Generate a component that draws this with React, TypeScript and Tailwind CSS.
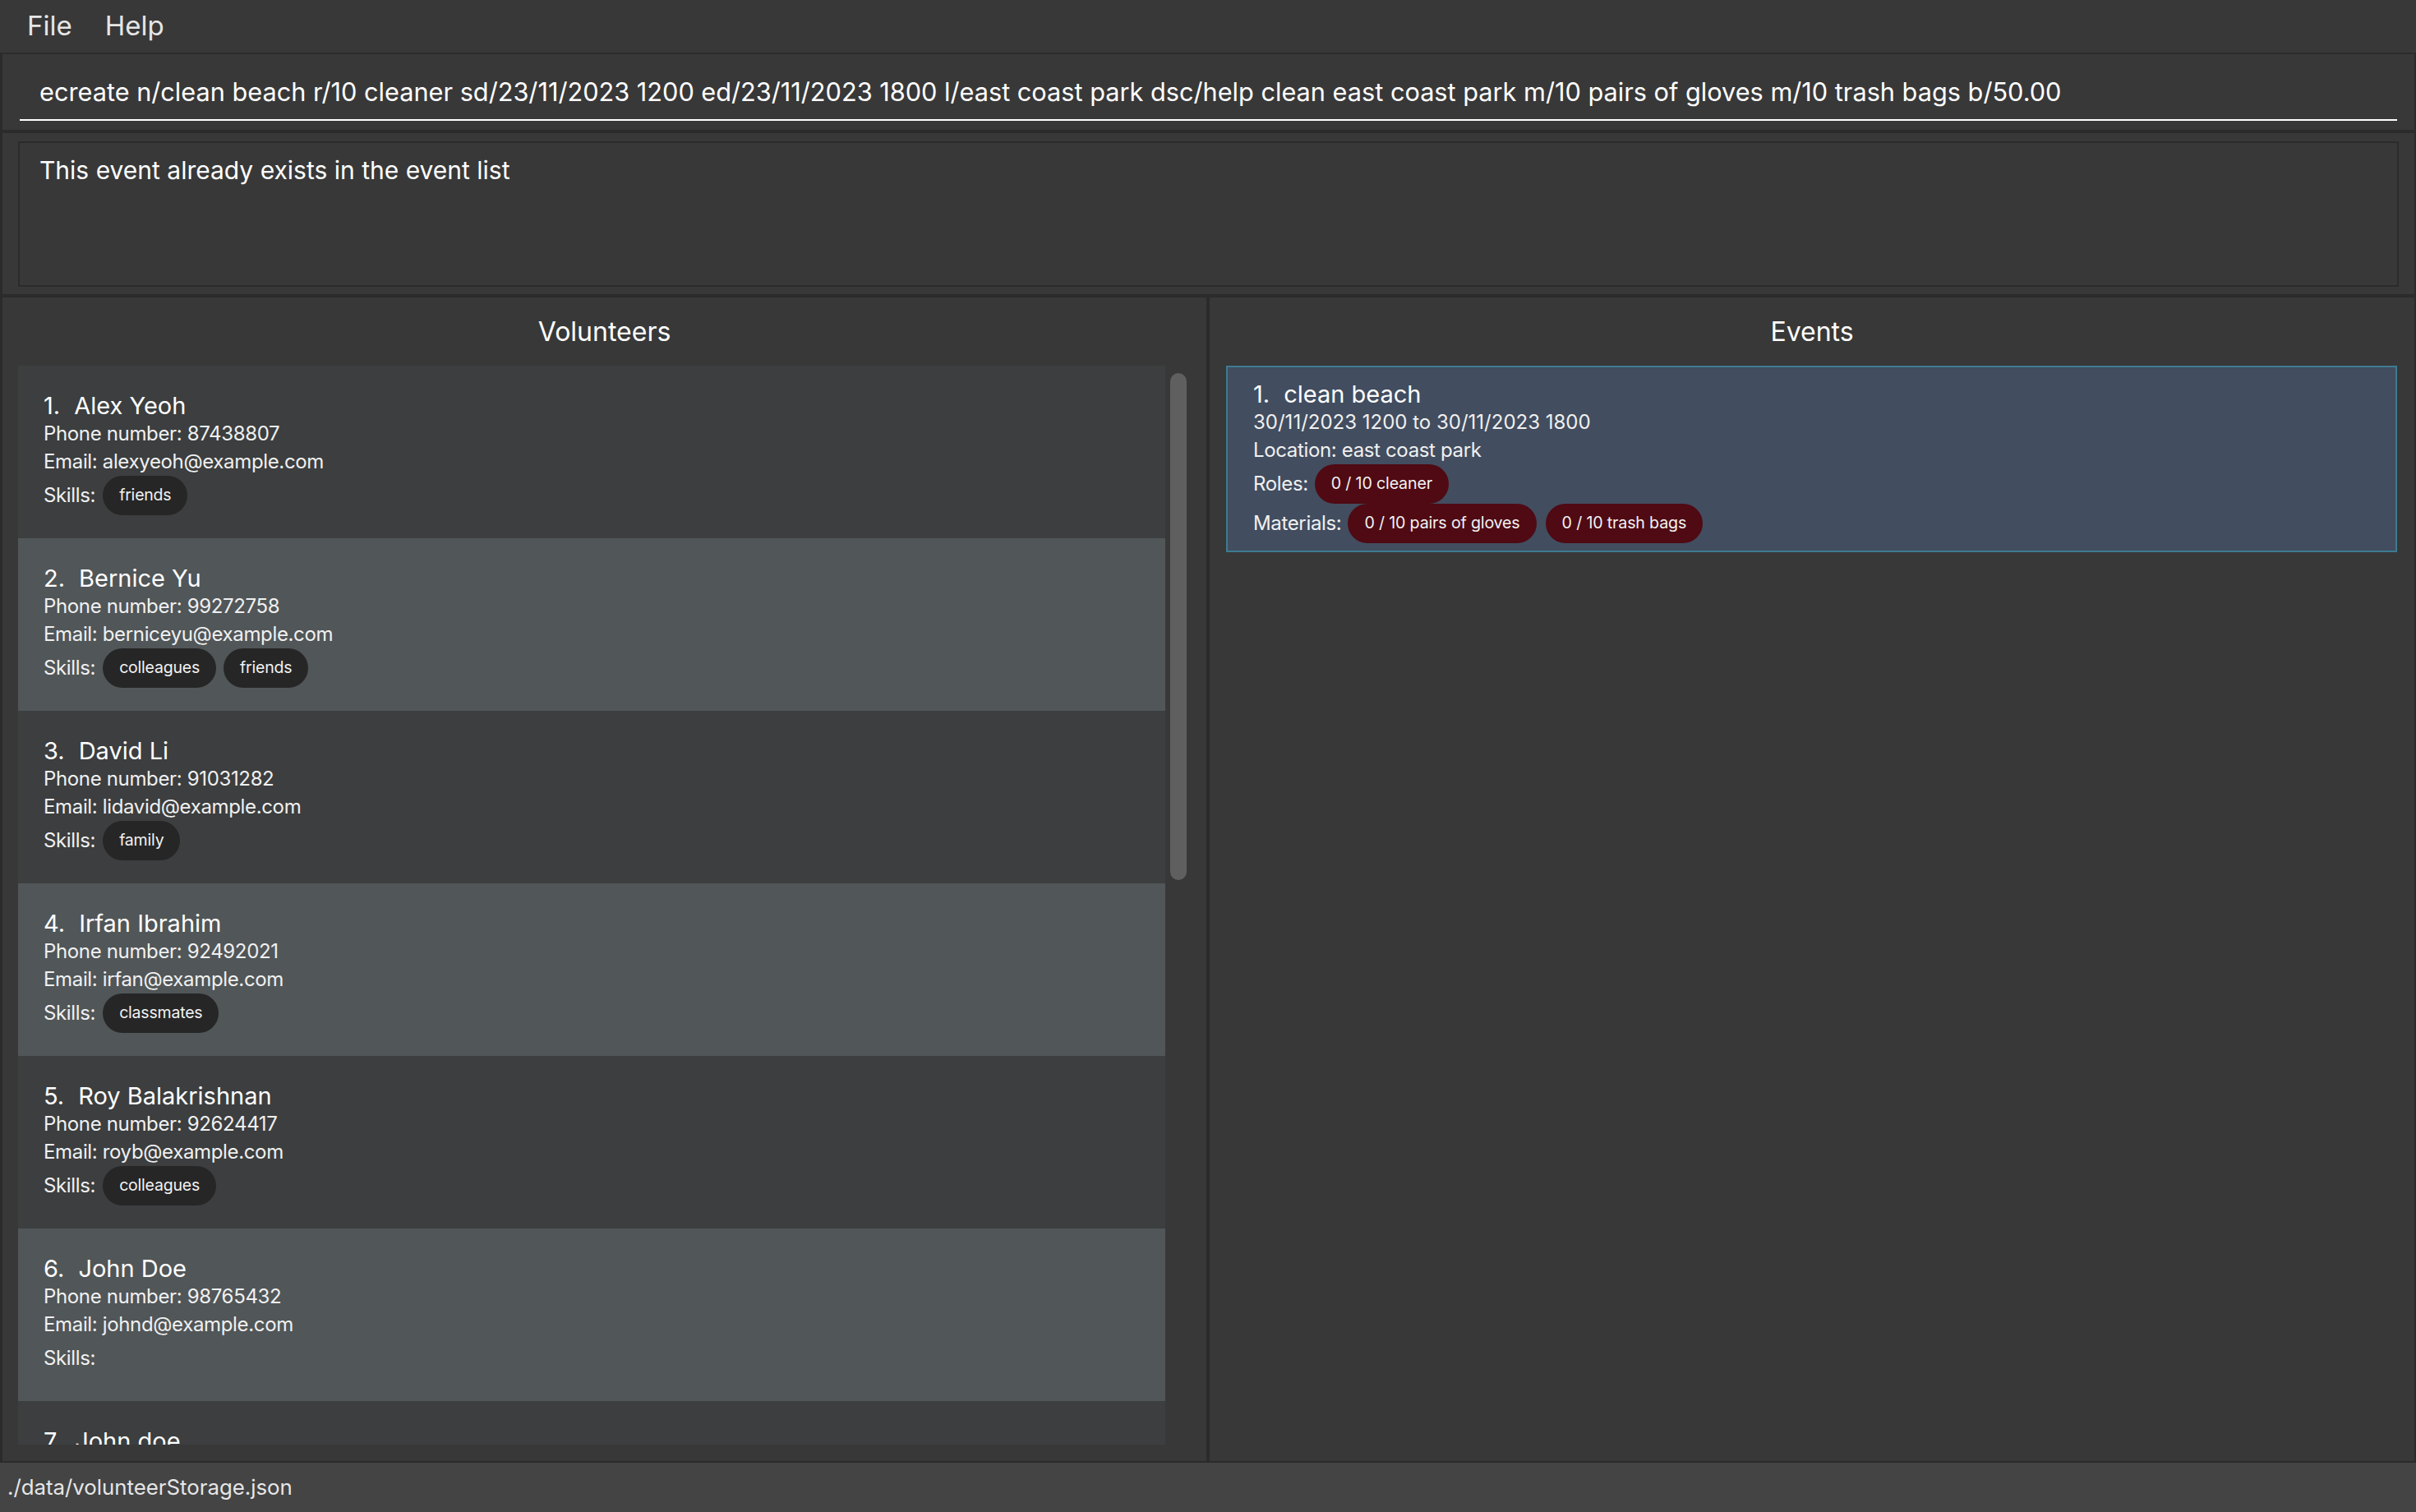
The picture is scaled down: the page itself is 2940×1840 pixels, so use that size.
import React from "react";

type Volunteer = {
  name: string;
  phone: string;
  email: string;
  skills: string[];
};

const volunteers: Volunteer[] = [
  { name: "Alex Yeoh", phone: "87438807", email: "alexyeoh@example.com", skills: ["friends"] },
  { name: "Bernice Yu", phone: "99272758", email: "berniceyu@example.com", skills: ["colleagues", "friends"] },
  { name: "David Li", phone: "91031282", email: "lidavid@example.com", skills: ["family"] },
  { name: "Irfan Ibrahim", phone: "92492021", email: "irfan@example.com", skills: ["classmates"] },
  { name: "Roy Balakrishnan", phone: "92624417", email: "royb@example.com", skills: ["colleagues"] },
  { name: "John Doe", phone: "98765432", email: "johnd@example.com", skills: [] },
  { name: "John doe", phone: "98765431", email: "johndoe@example.com", skills: [] },
];

const command =
  "ecreate n/clean beach r/10 cleaner sd/23/11/2023 1200 ed/23/11/2023 1800 l/east coast park dsc/help clean east coast park m/10 pairs of gloves m/10 trash bags b/50.00";

function Pill({ text, red }: { text: string; red?: boolean }) {
  return (
    <div
      className={
        red
          ? "flex h-[48px] items-center rounded-full bg-[#4f0a14] px-[20px] text-[19.6px] tracking-[-0.15px] text-[#f2f2f2]"
          : "flex h-[48px] items-center rounded-full bg-[#262626] px-[20px] text-[19.5px] tracking-[-0.2px] text-[#f2f2f2]"
      }
    >
      {text}
    </div>
  );
}

// the last card is cut by the bottom of the list, only its first line shows
function VolunteerCard({ v, index, cut }: { v: Volunteer; index: number; cut?: boolean }) {
  return (
    <div
      className={
        index % 2 === 0
          ? "h-[210px] shrink-0 bg-[#3c3e3f] pl-[31px] pt-[32px] text-[#f0f0f0]"
          : "h-[210px] shrink-0 bg-[#515658] pl-[31px] pt-[32px] text-[#f0f0f0]"
      }
    >
      <div className="flex h-[34px] items-center text-[29px] text-white">
        <span>{index + 1}.</span>
        <span className="ml-[17px]">{v.name}</span>
      </div>
      {!cut && (
        <>
          <div className="h-[34px] text-[24px] leading-[34px] tracking-[-0.35px]">Phone number: {v.phone}</div>
          <div className="h-[34px] text-[24px] leading-[34px] tracking-[-0.35px]">Email: {v.email}</div>
          <div className="flex h-[48px] items-center gap-[9px] text-[24px] tracking-[-0.35px]">
            <span>Skills:</span>
            {v.skills.map((s) => (
              <Pill key={s} text={s} />
            ))}
          </div>
        </>
      )}
    </div>
  );
}

function EventCard() {
  return (
    <div className="border-2 border-[#3e7b91] bg-[#424d5f] pb-[9px] pl-[31px] pt-[16px] text-[#f0f0f0]">
      <div className="flex h-[34px] items-center text-[29px] text-white">
        <span>1.</span>
        <span className="ml-[17px]">clean beach</span>
      </div>
      <div className="h-[34px] text-[24px] leading-[34px]">30/11/2023 1200 to 30/11/2023 1800</div>
      <div className="h-[34px] text-[24px] leading-[34px] tracking-[-0.35px]">Location: east coast park</div>
      <div className="flex h-[48px] items-center gap-[8px] text-[24px] tracking-[-0.35px]">
        <span>Roles:</span>
        <Pill text="0 / 10 cleaner" red />
      </div>
      <div className="flex h-[48px] items-center gap-[8px] text-[24px] tracking-[-0.35px]">
        <span>Materials:</span>
        <Pill text="0 / 10 pairs of gloves" red />
        <div className="ml-[3px]">
          <Pill text="0 / 10 trash bags" red />
        </div>
      </div>
    </div>
  );
}

export default function App() {
  return (
    <div className="flex h-[1840px] w-[2940px] flex-col overflow-hidden bg-[#2b2b2b] font-[Inter,'Noto_Sans',sans-serif]">
      {/* menu bar */}
      <div className="flex h-[64px] shrink-0 items-center gap-[40px] bg-[#383838] pl-[33px] text-[33px] text-[#e6e6e6]">
        <span>File</span>
        <span>Help</span>
      </div>

      {/* command box */}
      <div className="ml-[3px] mr-[2px] mt-[2px] h-[92px] shrink-0 bg-[#383838] px-[21px]">
        <div className="flex h-[81px] items-center overflow-hidden whitespace-nowrap border-b-2 border-white pl-[24px] pt-[14px] text-[30.7px] text-white">
          {command}
        </div>
      </div>

      {/* result display */}
      <div className="ml-[3px] mr-[2px] mt-[4px] h-[196px] shrink-0 bg-[#383838] px-[19px] pb-[9px] pt-[10px]">
        <div className="h-full border-2 border-[#2b2b2b] pl-[24px] pt-[13px] text-[30px] leading-[40px] text-white">
          This event already exists in the event list
        </div>
      </div>

      {/* lists */}
      <div className="ml-[3px] mr-[2px] mt-[4px] flex min-h-0 flex-1 gap-[4px]">
        <div className="flex w-[1465px] flex-col bg-[#383838]">
          <div className="flex h-[83px] shrink-0 items-center justify-center text-[32px] text-white">
            Volunteers
          </div>
          <div className="flex min-h-0 flex-1 pb-[20px] pl-[19px] pr-[22px]">
            <div className="flex min-w-0 flex-1 flex-col overflow-hidden">
              {volunteers.map((v, i) => (
                <VolunteerCard key={i} v={v} index={i} cut={i === volunteers.length - 1} />
              ))}
            </div>
            <div className="w-[28px] shrink-0">
              <div className="ml-[6px] mt-[9px] h-[617px] w-[20px] rounded-[10px] bg-[#5f5f5f]" />
            </div>
          </div>
        </div>

        <div className="flex flex-1 flex-col bg-[#383838]">
          <div className="flex h-[83px] shrink-0 items-center justify-center text-[32px] text-white">
            Events
          </div>
          <div className="pl-[20px] pr-[21px]">
            <EventCard />
          </div>
        </div>
      </div>

      {/* status bar */}
      <div className="mt-[2px] flex h-[60px] shrink-0 items-center bg-[#444444] pl-[9px] text-[25.8px] text-[#e6e6e6]">
        ./data/volunteerStorage.json
      </div>
    </div>
  );
}
